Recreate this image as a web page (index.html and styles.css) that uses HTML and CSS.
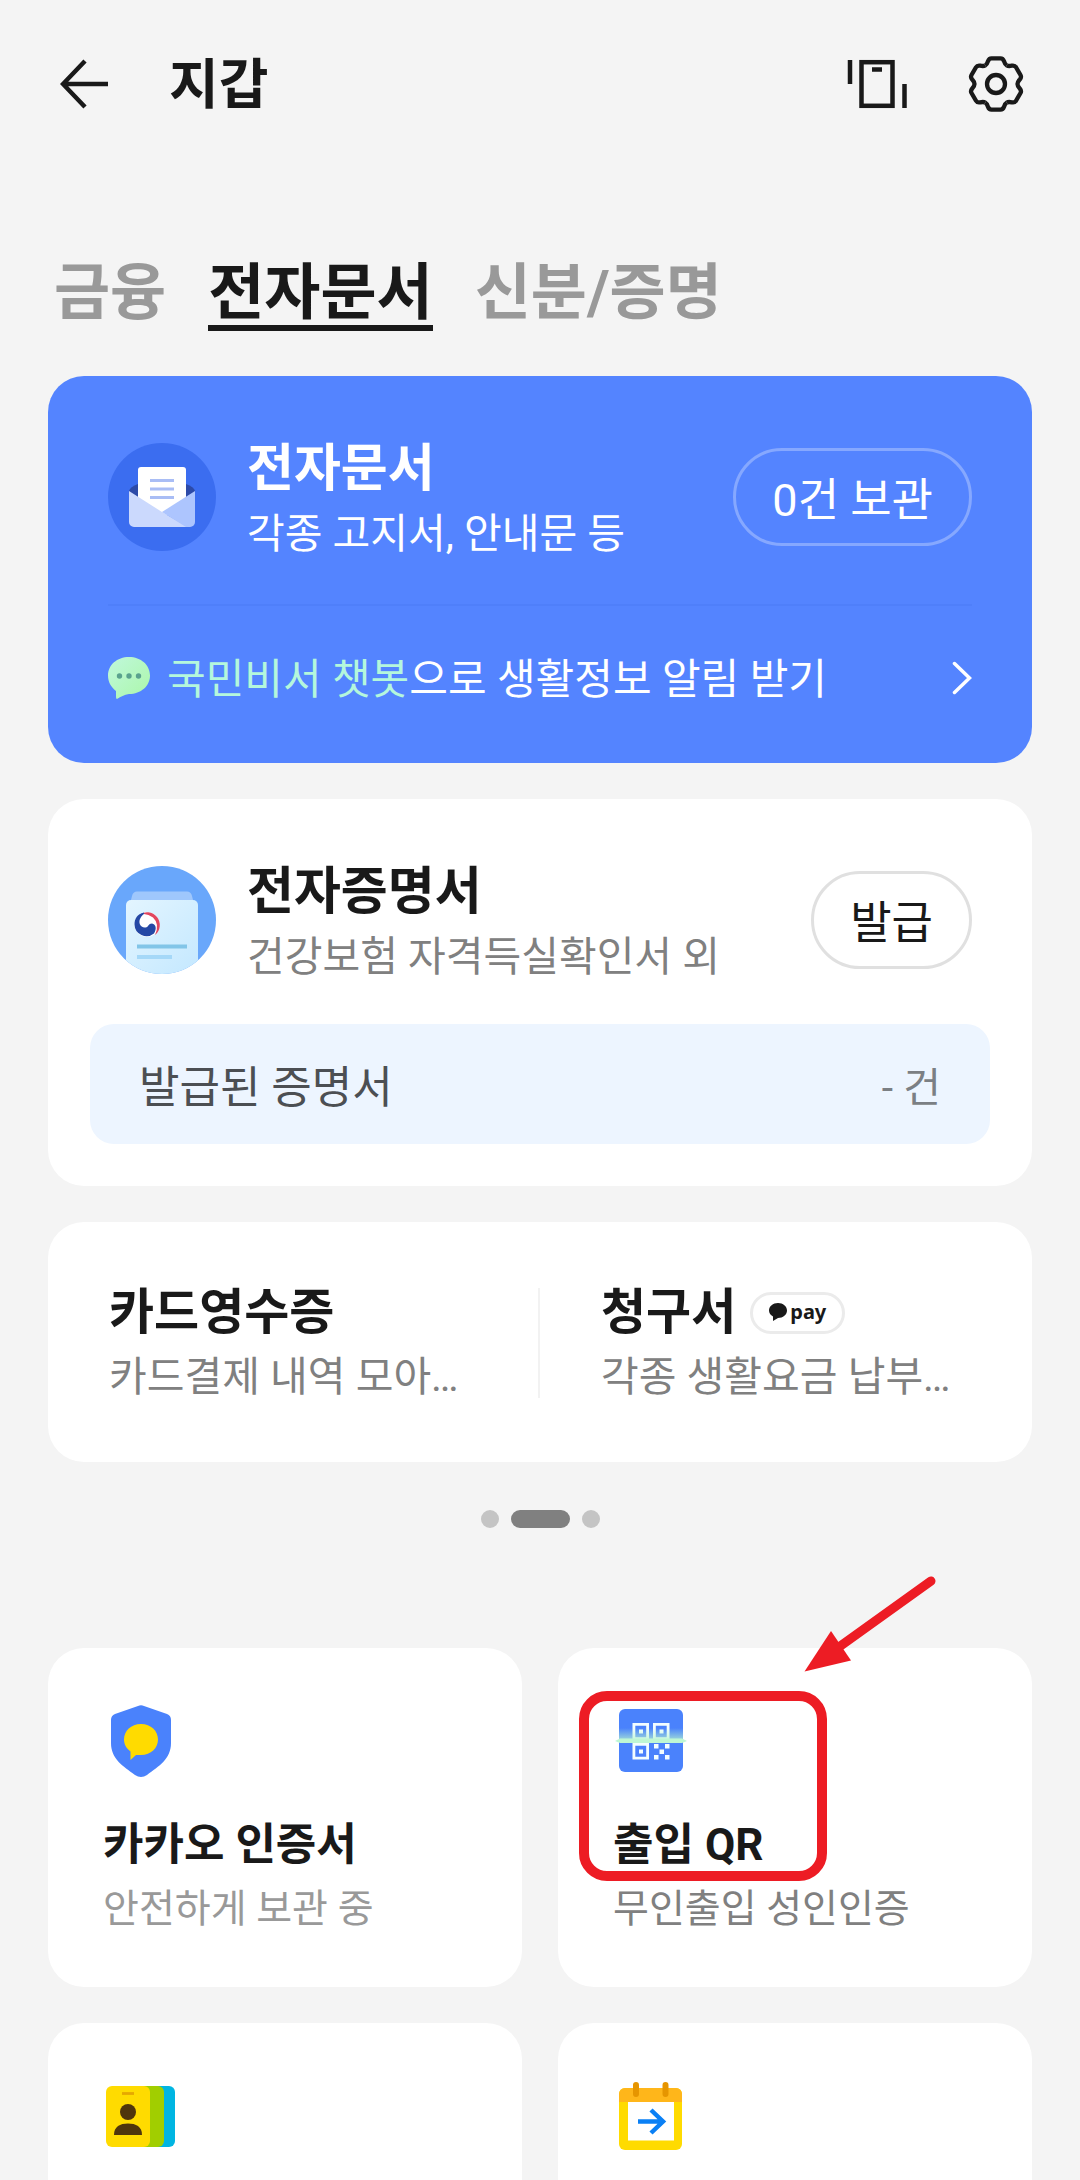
FILE: index.html
```html
<!DOCTYPE html>
<html lang="ko">
<head>
<meta charset="utf-8">
<meta name="viewport" content="width=device-width, initial-scale=1">
<title>지갑</title>
<link rel="stylesheet" href="styles.css">
</head>
<body>
<header class="topbar">
  <button class="icon-button" type="button" aria-label="뒤로">
    <svg width="48" height="56" viewBox="0 0 48 56" fill="none" stroke="#191919" stroke-width="4.5"><path d="M25 5 3 28l22 23M3 28h45"/></svg>
  </button>
  <h1 class="topbar-title">지갑</h1>
  <button class="icon-button" type="button" aria-label="카드 보기">
    <svg width="60" height="56" viewBox="0 0 60 56" fill="none" stroke="#191919" stroke-width="4.5"><path d="M3 4v24M57.500 28v24M25 13.500h10"/><rect x="14.500" y="6.200" width="31" height="43.600"/></svg>
  </button>
  <button class="icon-button" type="button" aria-label="설정">
    <svg width="56" height="56" viewBox="-28 -28 56 56" fill="none" stroke="#191919" stroke-width="4.300">
      <defs><path id="tooth" d="M-10.750-18.600C-9-19.600-8.600-20.800-8-22.800Q-7-25.700-4.500-25.700H4.500Q7-25.700 8-22.800C8.600-20.800 9-19.600 10.750-18.600"/></defs>
      <use href="#tooth"/><use href="#tooth" transform="rotate(60)"/><use href="#tooth" transform="rotate(120)"/><use href="#tooth" transform="rotate(180)"/><use href="#tooth" transform="rotate(240)"/><use href="#tooth" transform="rotate(300)"/>
      <circle r="9"/>
    </svg>
  </button>
</header>

<nav class="tabs">
  <a class="tab" href="#finance">금융</a>
  <a class="tab tab-active" href="#documents" aria-current="page">전자문서</a>
  <a class="tab" href="#identity">신분/증명</a>
</nav>

<main class="content">
  <section class="card card-blue">
    <div class="service">
      <svg class="service-icon" width="108" height="108" viewBox="0 0 108 108">
        <circle cx="54" cy="54" r="54" fill="#3b6df0"/>
        <path d="M21 48Q22 44 30 41H78Q86 44 87 48V62H21z" fill="#2c4aa8"/>
        <path d="M33 24H75a3 3 0 0 1 3 3V72H30V27a3 3 0 0 1 3-3z" fill="#fff"/>
        <path d="M42 37.500h24M42 46h24M42 54.500h24" stroke="#a9bdf5" stroke-width="3"/>
        <path d="M21 48 54 69 80 84H26a5 5 0 0 1-5-5z" fill="#cbd9fd"/>
        <path d="M87 48 54 69 78 84h4a5 5 0 0 0 5-5z" fill="#adc5fe"/>
      </svg>
      <div class="service-text">
        <h2 class="service-title">전자문서</h2>
        <p class="service-desc">각종 고지서, 안내문 등</p>
      </div>
      <button class="pill" type="button">0건 보관</button>
    </div>
    <a class="notice" href="#chatbot">
      <svg width="42" height="42" viewBox="0 0 42 42">
        <defs><linearGradient id="mint" x1="0" y1="0" x2="1" y2="1"><stop offset="0" stop-color="#c0f8dc"/><stop offset="1" stop-color="#abf7a9"/></linearGradient></defs>
        <path d="M21 0C33 0 42 8 42 18.500S33 37 21 37C16 38 13 39.500 9 42Q8 42 8 40V34C3 30 0 25 0 18.500 0 8 9 0 21 0z" fill="url(#mint)"/>
        <circle cx="11.500" cy="19" r="2.700" fill="#5aa28e"/><circle cx="21" cy="19" r="2.700" fill="#5aa28e"/><circle cx="30.500" cy="19" r="2.700" fill="#5aa28e"/>
      </svg>
      <span class="notice-text"><span class="notice-accent">국민비서 챗봇</span>으로 생활정보 알림 받기</span>
      <svg width="20" height="34" viewBox="0 0 20 34" fill="none" stroke="#fff" stroke-width="3.500" stroke-linecap="round"><path d="M2.500 2.500 17.500 17 2.500 31.500"/></svg>
    </a>
  </section>

  <section class="card card-certificate">
    <div class="service">
      <svg class="service-icon" width="108" height="108" viewBox="0 0 108 108">
        <defs>
          <clipPath id="disc"><circle cx="54" cy="54" r="54"/></clipPath>
          <linearGradient id="sheet" x1="0" y1="0" x2="1" y2="1"><stop offset="0" stop-color="#e3f5ff"/><stop offset="1" stop-color="#c4e8ff"/></linearGradient>
        </defs>
        <g clip-path="url(#disc)">
          <path d="M0 0H108V108H0z" fill="#69a7fb"/>
          <path d="M29 25.500H79Q83 25.500 84 30L86 38H22L24 30Q25 25.500 29 25.500z" fill="#9fc7fc"/>
          <path d="M23 34H85a5 5 0 0 1 5 5V108H18V39a5 5 0 0 1 5-5z" fill="url(#sheet)"/>
          <path d="M29 80.500h50" stroke="#82c5e8" stroke-width="4"/>
          <path d="M29 91h35" stroke="#a5d8f8" stroke-width="4"/>
          <circle cx="39" cy="58.500" r="12.500" fill="#fff"/>
          <path d="M31 49A12.500 12.500 0 0 1 47 69Q52 58 45 51.500 38 46 31 49z" fill="#e2475f"/>
          <path d="M36 46.500C29 48 26.500 53 26.500 58.500A12 12 0 0 0 46 67.500C49 63 48 58 44 57.500 40 57.500 41 61 37.500 61.500 32 62 30 56 32.500 52 34 49 37 48 36 46.500z" fill="#2548a5"/>
        </g>
      </svg>
      <div class="service-text">
        <h2 class="service-title">전자증명서</h2>
        <p class="service-desc">건강보험 자격득실확인서 외</p>
      </div>
      <button class="pill" type="button">발급</button>
    </div>
    <a class="issued" href="#issued"><span>발급된 증명서</span><span class="issued-count">- 건</span></a>
  </section>

  <section class="card card-bills">
    <a class="bill" href="#receipts">
      <h2 class="bill-title">카드영수증</h2>
      <p class="service-desc">카드결제 내역 모아…</p>
    </a>
    <a class="bill" href="#bills">
      <h2 class="bill-title">청구서
        <span class="pay"><svg width="18" height="18" viewBox="0 0 18 18" fill="#191919"><path d="M9 0C14 0 18 3.300 18 7.500S14 15 9 15L4 18V13.500C1.500 12 0 10 0 7.500 0 3.300 4 0 9 0z"/></svg>pay</span>
      </h2>
      <p class="service-desc">각종 생활요금 납부…</p>
    </a>
  </section>

  <div class="pager">
    <span class="dot"></span><span class="dot dot-active"></span><span class="dot"></span>
  </div>

  <section class="shortcuts">
    <a class="card shortcut" href="#certificate">
      <svg class="shortcut-icon" width="72" height="72" viewBox="0 0 72 72">
        <path d="M33 1Q36-.5 39 1L62 9Q66 10.500 66 15V38C66 54 54 61 42 70Q36 74 30 70C18 61 6 54 6 38V15Q6 10.500 10 9z" fill="#4a82fc"/>
        <path d="M36 19C46 19 53 26 53 34.500S46 50 36 50H31L25.500 55V46.500C21.500 43.500 19 39.500 19 34.500 19 26 26 19 36 19z" fill="#ffdb00"/>
      </svg>
      <h3 class="shortcut-title">카카오 인증서</h3>
      <p class="shortcut-desc shortcut-desc-light">안전하게 보관 중</p>
    </a>
    <a class="card shortcut" href="#qr">
      <svg class="shortcut-icon" width="72" height="72" viewBox="0 0 72 72">
        <defs><linearGradient id="scan" x1="0" y1="0" x2="0" y2="1"><stop offset="0" stop-color="#b9f6cf" stop-opacity="0"/><stop offset="1" stop-color="#b9f6cf" stop-opacity=".75"/></linearGradient></defs>
        <rect x="4" y="4" width="64" height="63" rx="6" fill="#4a82fc"/>
        <g fill="none" stroke="#f2fdff" stroke-width="2.800"><path d="M18.900 19.400h13.700v14.200H18.900zM39.400 19.400h13.700v14.200H39.400zM18.900 39.400h13.700v13.700H18.900z"/></g>
        <path d="M24 24.500h4v4h-4zM44.500 24.500h4v4h-4zM24 44.500h4v4h-4zM39 39h4.500v4.500H39zM50 39h4.500v4.500H50zM44.500 44.500h4.500v4.500h-4.500zM39 50h4.500v4.500H39zM50 50h4.500v4.500H50z" fill="#f2fdff"/>
        <rect x="4" y="23" width="64" height="12" fill="url(#scan)"/>
        <path d="M0 36 5 33.500H67L72 36 67 38H5z" fill="#bff7d3"/>
      </svg>
      <h3 class="shortcut-title">출입 QR</h3>
      <p class="shortcut-desc">무인출입 성인인증</p>
      <span class="highlight"></span>
      <svg class="pointer" width="136" height="104" viewBox="0 0 136 104"><path d="M127 9 35 75" stroke="#ed1c24" stroke-width="9" stroke-linecap="round"/><path d="M.5 99.500 27 59 47 88.500z" fill="#ed1c24"/></svg>
    </a>
    <a class="card shortcut shortcut-cut" href="#id-card" aria-label="신분증">
      <svg class="shortcut-icon" width="72" height="72" viewBox="0 0 72 72">
        <rect x="35" y="6" width="35" height="61" rx="6" fill="#00b5e2"/>
        <path d="M35 6H53a6 6 0 0 1 6 6V61a6 6 0 0 1-6 6H35z" fill="#a1ce00"/>
        <rect x="1" y="6" width="44" height="61" rx="6" fill="#ffdb00"/>
        <path d="M17 13.500h12" stroke="#e6a800" stroke-width="2.800"/>
        <circle cx="23" cy="32" r="8" fill="#4f350c"/>
        <path d="M9 55C9 46.500 15 43.500 23 43.500S37 46.500 37 55z" fill="#4f350c"/>
      </svg>
    </a>
    <a class="card shortcut shortcut-cut" href="#schedule" aria-label="일정">
      <svg class="shortcut-icon" width="72" height="72" viewBox="0 0 72 72">
        <rect x="4" y="8" width="63" height="62" rx="6" fill="#ffdb00"/>
        <path d="M10 8H61a6 6 0 0 1 6 6V22H4V14a6 6 0 0 1 6-6z" fill="#ffb61a"/>
        <rect x="13" y="22" width="46" height="38.500" fill="#fff"/>
        <path d="M21 5v9M50.500 5v9" stroke="#e69500" stroke-width="6" stroke-linecap="round"/>
        <path d="M23 41.500H47M36 30 48 41.500 36 53" fill="none" stroke="#0a80f5" stroke-width="4.500"/>
      </svg>
    </a>
  </section>
</main>
</body>
</html>
```

FILE: styles.css
```css
* { box-sizing: border-box; }

body {
  margin: 0;
  background: #f4f4f4;
  color: #191919;
  font-family: Roboto, "Noto Sans CJK KR", sans-serif;
}

h1, h2, h3, p { margin: 0; }
a { color: inherit; text-decoration: none; }
svg { display: block; flex: none; }

button {
  margin: 0;
  border: 0;
  padding: 0;
  background: none;
  color: inherit;
  font: inherit;
}

.topbar {
  display: flex;
  align-items: center;
  gap: 61px;
  height: 168px;
  padding: 0 56px 0 60px;
}

.topbar-title {
  flex: 1;
  padding-top: 4px;
  font-size: 54px;
  line-height: 72px;
}

.tabs {
  display: flex;
  gap: 42px;
  padding: 94px 54px 45px;
}

.tab {
  border-bottom: 6px solid transparent;
  color: #999;
  font-size: 61px;
  font-weight: 700;
  line-height: 63px;
}

.tab-active {
  border-color: #191919;
  color: #191919;
}

.content { padding: 0 48px; }

.card {
  margin-bottom: 36px;
  border-radius: 36px;
  background: #fff;
}

.card-blue {
  padding: 67px 60px 13px;
  background: #5484ff;
  color: #fff;
}

.service {
  display: flex;
  align-items: center;
  gap: 31px;
  height: 108px;
}

.service-text {
  flex: 1;
  padding-top: 3px;
}

.service-title {
  font-size: 51px;
  line-height: 70px;
}

.service-desc {
  color: #808080;
  font-size: 41px;
  line-height: 60px;
  white-space: nowrap;
}

.pill {
  height: 98px;
  padding: 0 36px 2px;
  border: 3px solid #e0e0e0;
  border-radius: 49px;
  font-size: 45px;
}

.card-blue .service-desc { color: #fff; }
.card-blue .pill { border-color: #86a8ff; }

.notice {
  display: flex;
  align-items: center;
  gap: 17px;
  height: 146px;
  margin-top: 53px;
  border-top: 2px solid #4f7ffa;
  font-size: 42px;
  line-height: 60px;
}

.notice-text {
  flex: 1;
  padding-top: 4px;
}

.notice-accent { color: #b4f7dc; }

.card-certificate { padding: 67px 42px 42px; }
.card-certificate .service { padding: 0 18px; }

.issued {
  display: flex;
  align-items: center;
  justify-content: space-between;
  height: 120px;
  margin-top: 50px;
  padding: 0 49px;
  border-radius: 24px;
  background: #edf5ff;
  color: #4c4f53;
  font-size: 44px;
}

.issued-count {
  color: #7b7f84;
  font-size: 41px;
}

.card-bills {
  display: grid;
  grid-template-columns: 1fr 1fr;
  padding: 57px 0 55px;
}

.bill { padding: 0 61px; }

.bill + .bill { position: relative; }

.bill + .bill::before {
  content: "";
  position: absolute;
  left: -2px;
  top: 9px;
  width: 2px;
  height: 110px;
  background: #f2f2f2;
}

.bill-title {
  display: flex;
  align-items: center;
  gap: 14px;
  font-size: 49px;
  line-height: 68px;
}

.pay {
  display: flex;
  align-items: center;
  gap: 3px;
  height: 42px;
  padding: 0 16px 2px;
  border: 3px solid #ebebeb;
  border-radius: 21px;
  font-family: "Noto Sans", sans-serif;
  font-size: 20px;
  line-height: 32px;
}

.pager {
  display: flex;
  justify-content: center;
  gap: 12px;
  padding: 12px 0 120px;
}

.dot {
  width: 18px;
  height: 18px;
  border-radius: 9px;
  background: #c4c4c4;
}

.dot-active {
  width: 59px;
  background: #808080;
}

.shortcuts {
  display: grid;
  grid-template-columns: 1fr 1fr;
  gap: 36px;
}

.shortcut {
  position: relative;
  margin: 0;
  padding: 57px 55px 48px;
}

.shortcut-icon { margin-left: 2px; }

.shortcut-title {
  margin-top: 34px;
  font-size: 44px;
  line-height: 68px;
}

.shortcut-desc {
  color: #808080;
  font-size: 39px;
  line-height: 60px;
}

.shortcut-desc-light { color: #999; }

.shortcut-cut {
  padding-bottom: 28px;
  border-radius: 36px 36px 0 0;
}

.highlight {
  position: absolute;
  left: 21px;
  top: 43px;
  width: 248px;
  height: 190px;
  border: 10px solid #ed1c24;
  border-radius: 28px;
}

.pointer {
  position: absolute;
  left: 246px;
  top: -76px;
}
```
